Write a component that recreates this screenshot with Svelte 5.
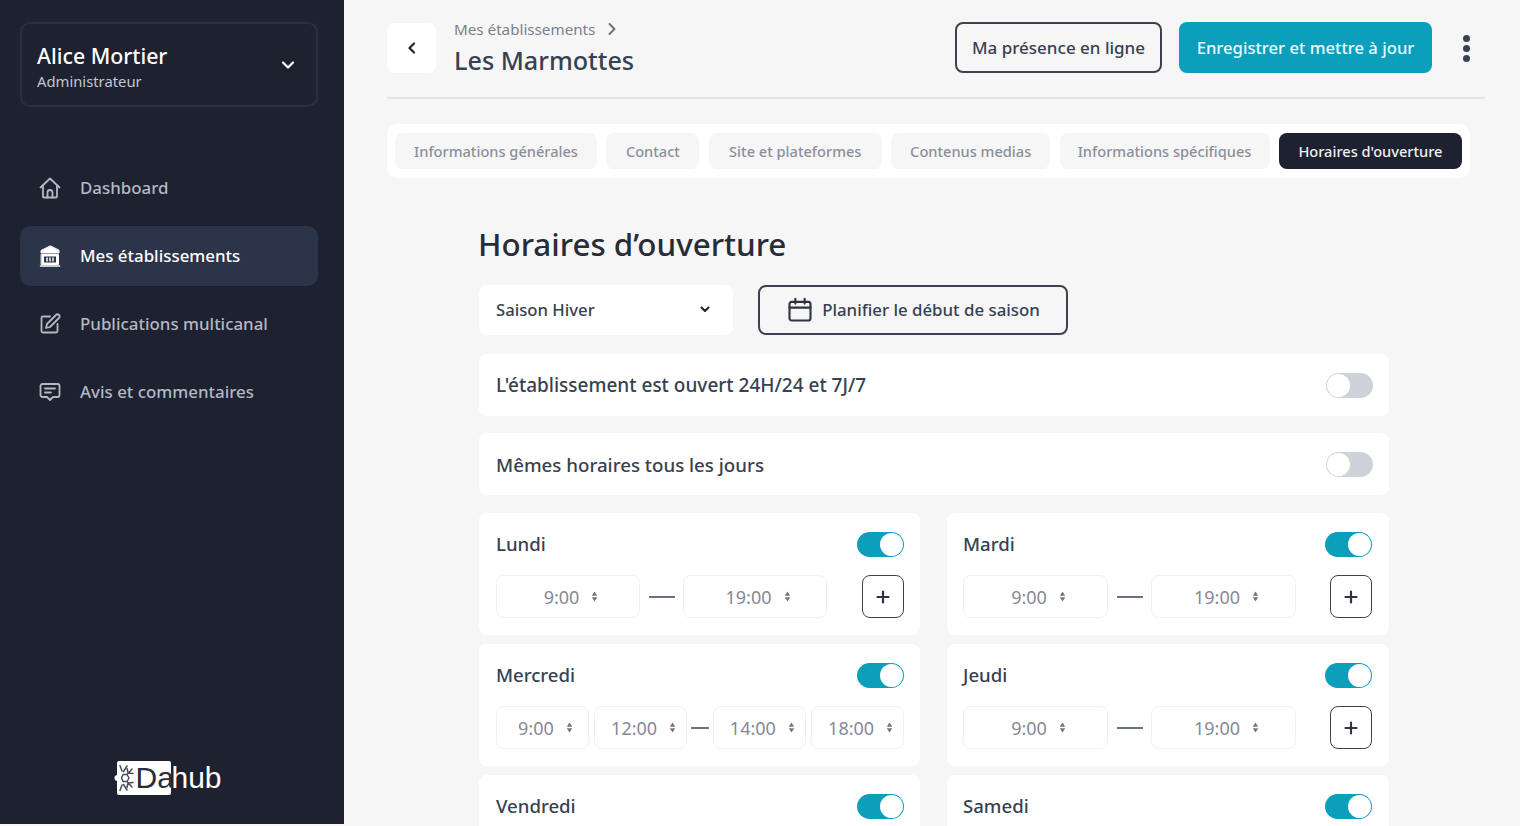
<script>
  const nav = [
    { label: 'Dashboard', icon: 'home' },
    { label: 'Mes établissements', icon: 'bank', active: true },
    { label: 'Publications multicanal', icon: 'edit' },
    { label: 'Avis et commentaires', icon: 'chat' }
  ];
  const tabs = [
    'Informations générales',
    'Contact',
    'Site et plateformes',
    'Contenus medias',
    'Informations spécifiques',
    "Horaires d'ouverture"
  ];
  const days = [
    { name: 'Lundi', times: ['9:00', '19:00'] },
    { name: 'Mardi', times: ['9:00', '19:00'] },
    { name: 'Mercredi', times: ['9:00', '12:00', '14:00', '18:00'] },
    { name: 'Jeudi', times: ['9:00', '19:00'] },
    { name: 'Vendredi', times: [] },
    { name: 'Samedi', times: [] }
  ];
</script>

{#snippet spin()}
  <svg class="spin" viewBox="0 0 7 11" width="7" height="11" aria-hidden="true">
    <path d="M3.500 0.500 6.200 4.700H0.800ZM3.500 10.500 0.800 6.300H6.200Z" fill="#70757f" />
  </svg>
{/snippet}

{#snippet time(t)}
  <div class="time"><span>{t}</span>{@render spin()}</div>
{/snippet}

<div class="app">
  <aside class="side">
    <div class="user">
      <div class="who">
        <div class="uname">Alice Mortier</div>
        <div class="urole">Administrateur</div>
      </div>
      <svg viewBox="0 0 16 16" width="16" height="16" fill="none" stroke="#fff" stroke-width="2.200" stroke-linecap="round" stroke-linejoin="round"><path d="M3 5.500 8 10.500 13 5.500" /></svg>
    </div>
    <nav class="nav">
      {#each nav as n}
        <div class="item" class:active={n.active}>
          <svg viewBox="0 0 24 24" width="24" height="24" fill="none" stroke="currentColor" stroke-width="1.800" stroke-linecap="round" stroke-linejoin="round">
            {#if n.icon === 'home'}
              <path d="M2.500 11.500 12 2.500l9.500 9" />
              <path d="M5 9.500V20.500a1 1 0 0 0 1 1h12a1 1 0 0 0 1-1V9.500" />
              <path d="M9.500 21.500V16.500a2.500 2.500 0 0 1 5 0v5" />
            {:else if n.icon === 'bank'}
              <path d="M12 2 3 6.500V9h18V6.500Z" fill="currentColor" stroke-width="1" />
              <path d="M3.500 10.500h17V20.500h-17Z" fill="currentColor" stroke-width="1" />
              <rect x="6" y="12.500" width="12" height="6" fill="#2c3449" stroke="none" />
              <path d="M9 13.500v4M12 13.500v4M15 13.500v4" stroke="#fff" stroke-width="1.500" stroke-linecap="butt" />
              <path d="M2.500 22h19" stroke-width="1.500" />
            {:else if n.icon === 'edit'}
              <path d="M12 4.500H5a1.500 1.500 0 0 0-1.500 1.500v13A1.500 1.500 0 0 0 5 20.500h13a1.500 1.500 0 0 0 1.500-1.500v-7" />
              <path d="M18 3a2.100 2.100 0 0 1 3 3l-9 9-4 1 1-4Z" />
            {:else}
              <path d="M4.500 4h15A2 2 0 0 1 21.500 6v9a2 2 0 0 1-2 2H15l-3 3-3-3H4.500a2 2 0 0 1-2-2V6a2 2 0 0 1 2-2Z" />
              <path d="M7 8.500h10M7 12.500h6" />
            {/if}
          </svg>
          <span>{n.label}</span>
        </div>
      {/each}
    </nav>
    <div class="logo">
      <div class="logobox">
        <svg viewBox="0 0 22 32" width="22" height="32" fill="none" stroke="#4a4d56" stroke-width="1.500" stroke-linecap="round" stroke-linejoin="round">
          <circle cx="3.500" cy="16" r="3" fill="#fff" stroke="none" />
          <path d="M9 12.500h4l2 3.500-2 3.500H9L7.500 16Z" />
          <path d="M6 3.500 8 9M13 4l-3.500 5.500" />
          <path d="M13.500 12 18 7M13 6.500l1 4.500 5 .5" />
          <path d="M6 28.500 8 23M13 28l-3.500-5.500" />
          <path d="M13.500 20 18 25M13 25.500l1-4.500 5-.5" />
        </svg>
        <span>Da</span>
      </div>
      <span class="hub">hub</span>
    </div>
  </aside>

  <main class="main">
    <header class="head">
      <button class="back" aria-label="Retour">
        <svg viewBox="0 0 12 12" width="12" height="12" fill="none" stroke="#1d2130" stroke-width="2.200" stroke-linecap="round" stroke-linejoin="round"><path d="M8 1.500 3.500 6 8 10.500" /></svg>
      </button>
      <div class="crumbs">
        <div class="crumb">
          <span>Mes établissements</span>
          <svg viewBox="0 0 10 14" width="10" height="14" fill="none" stroke="#6b7280" stroke-width="2" stroke-linecap="round" stroke-linejoin="round"><path d="M2.500 2 7.500 7 2.500 12" /></svg>
        </div>
        <div class="place">Les Marmottes</div>
      </div>
      <button class="btn-line">Ma présence en ligne</button>
      <button class="btn-main">Enregistrer et mettre à jour</button>
      <div class="dots"><i></i><i></i><i></i></div>
    </header>

    <div class="tabs">
      {#each tabs as t, i}
        <div class="tab" class:on={i === 5}>{t}</div>
      {/each}
    </div>

    <section class="content">
      <h1>Horaires d’ouverture</h1>
      <div class="tools">
        <div class="select">
          <span>Saison Hiver</span>
          <svg viewBox="0 0 12 12" width="12" height="12" fill="none" stroke="#1d2130" stroke-width="2" stroke-linecap="round" stroke-linejoin="round"><path d="M2.500 4.500 6 8l3.500-3.500" /></svg>
        </div>
        <button class="plan">
          <svg viewBox="0 0 24 24" width="28" height="28" fill="none" stroke="#2d3340" stroke-width="1.800" stroke-linecap="round" stroke-linejoin="round"><rect x="3" y="5" width="18" height="16" rx="2" /><path d="M8 2.500v4M16 2.500v4M3 10h18" /></svg>
          <span>Planifier le début de saison</span>
        </button>
      </div>

      <div class="row"><span>L'établissement est ouvert 24H/24 et 7J/7</span><div class="toggle"></div></div>
      <div class="row second"><span>Mêmes horaires tous les jours</span><div class="toggle"></div></div>

      <div class="days">
        {#each days as d}
          <div class="day">
            <div class="dayhead">
              <span>{d.name}</span>
              <div class="toggle on"></div>
            </div>
            {#if d.times.length === 2}
              <div class="times">
                {@render time(d.times[0])}
                <div class="dash"></div>
                {@render time(d.times[1])}
                <button class="plus" aria-label="Ajouter">
                  <svg viewBox="0 0 14 14" width="14" height="14" fill="none" stroke="#2d3340" stroke-width="2.200" stroke-linecap="round"><path d="M7 1.500v11M1.500 7h11" /></svg>
                </button>
              </div>
            {:else if d.times.length === 4}
              <div class="times four">
                {@render time(d.times[0])}
                {@render time(d.times[1])}
                <div class="dash short"></div>
                {@render time(d.times[2])}
                {@render time(d.times[3])}
              </div>
            {/if}
          </div>
        {/each}
      </div>
    </section>
  </main>
</div>

<style>
  :global(body) {
    margin: 0;
    background: #f6f6f6;
  }
  .app {
    display: flex;
    align-items: flex-start;
    height: 826px;
    overflow: hidden;
    font-family: "Noto Sans", "Open Sans", sans-serif;
    color: #374151;
  }
  button {
    font-family: inherit;
    cursor: pointer;
  }
  .side {
    width: 344px;
    height: 824px;
    flex: none;
    box-sizing: border-box;
    background: #1d2130;
    padding: 22px 26px 0 20px;
    display: flex;
    flex-direction: column;
  }
  .user {
    height: 85px;
    box-sizing: border-box;
    border: 2px solid #2b3040;
    border-radius: 10px;
    padding: 0 20px 0 15px;
    display: flex;
    align-items: center;
    justify-content: space-between;
  }
  .who {
    margin-top: 4px;
  }
  .uname {
    color: #fff;
    font-size: 21.300px;
    font-weight: 500;
    line-height: 28px;
  }
  .urole {
    color: #c3c6cf;
    font-size: 14.800px;
    line-height: 20px;
    margin-top: 1px;
  }
  .nav {
    margin-top: 51px;
    display: flex;
    flex-direction: column;
    gap: 8px;
  }
  .item {
    height: 60px;
    border-radius: 10px;
    display: flex;
    align-items: center;
    gap: 18px;
    padding-left: 18px;
    color: #b4b8c2;
    font-size: 16.900px;
    font-weight: 500;
  }
  .item svg {
    flex: none;
  }
  .item span {
    margin-top: -2px;
  }
  .item.active {
    background: #2c3449;
    color: #fff;
  }
  .logo {
    margin-top: auto;
    margin-bottom: 29px;
    align-self: center;
    margin-left: 1px;
    display: flex;
    align-items: center;
    color: #fff;
    font-size: 30px;
    line-height: 34px;
    font-family: "Liberation Sans", sans-serif;
  }
  .logobox {
    display: flex;
    align-items: center;
    background: #fff;
    color: #2a2d36;
    height: 34px;
    width: 54px;
    border-radius: 2px;
    overflow: visible;
  }
  .logobox svg {
    flex: none;
    margin-left: -3px;
    margin-right: -1px;
  }
  .main {
    flex: 1;
    min-width: 0;
    box-sizing: border-box;
    padding: 0 35px 0 43px;
  }
  .head {
    height: 99px;
    box-sizing: border-box;
    border-bottom: 2px solid #e2e3e6;
    display: flex;
    align-items: flex-start;
    padding-top: 23px;
  }
  .back {
    width: 49px;
    height: 50px;
    background: #fff;
    border: none;
    border-radius: 8px;
    display: flex;
    align-items: center;
    justify-content: center;
    padding: 0;
  }
  .crumbs {
    margin-left: 18px;
    margin-top: -3px;
    flex: 1;
  }
  .crumb {
    display: flex;
    align-items: center;
    gap: 12px;
    height: 18px;
    color: #7b808c;
    font-size: 15.200px;
  }
  .place {
    font-size: 25.200px;
    font-weight: 500;
    line-height: 34px;
    margin-top: 5px;
    color: #374151;
  }
  .btn-line {
    width: 207px;
    height: 51px;
    margin-top: -1px;
    box-sizing: border-box;
    background: #f6f6f6;
    border: 2px solid #3d4250;
    border-radius: 8px;
    font-size: 17px;
    font-weight: 500;
    color: #374151;
    padding: 0;
  }
  .btn-main {
    width: 253px;
    height: 51px;
    margin-top: -1px;
    margin-left: 17px;
    background: #0b9fbc;
    border: none;
    border-radius: 8px;
    color: #e6fbff;
    font-size: 16.650px;
    font-weight: 500;
    padding: 0;
  }
  .dots {
    width: 53px;
    height: 50px;
    flex: none;
    display: flex;
    flex-direction: column;
    align-items: center;
    justify-content: center;
    gap: 3px;
    padding-left: 15px;
    box-sizing: border-box;
  }
  .dots i {
    width: 7px;
    height: 7px;
    border-radius: 50%;
    background: #374151;
  }
  .tabs {
    margin-top: 25px;
    width: 1083px;
    height: 54px;
    box-sizing: border-box;
    background: #fff;
    border-radius: 10px;
    padding: 9px 8px;
    display: grid;
    grid-template-columns: 202px 93px 173px 159px 210px 183px;
    column-gap: 9.400px;
  }
  .tab {
    height: 36px;
    box-sizing: border-box;
    display: flex;
    align-items: center;
    justify-content: center;
    background: #f6f6f6;
    border-radius: 8px;
    color: #8b8f9a;
    font-size: 14.600px;
    font-weight: 500;
    white-space: nowrap;
  }
  .tab.on {
    background: #1d2130;
    color: #eef0f3;
  }
  .content {
    width: 910px;
    margin-left: 92px;
    margin-top: 45px;
  }
  h1 {
    margin: 0;
    margin-left: -1px;
    font-size: 31.400px;
    font-weight: 500;
    line-height: 42px;
    color: #282c36;
  }
  .tools {
    margin-top: 20px;
    display: flex;
    gap: 25px;
  }
  .select {
    width: 254px;
    height: 50px;
    box-sizing: border-box;
    background: #fff;
    border-radius: 8px;
    padding: 0 22px 2px 17px;
    display: flex;
    align-items: center;
    justify-content: space-between;
    font-size: 16.700px;
    font-weight: 500;
    color: #374151;
  }
  .plan {
    width: 310px;
    height: 50px;
    background: #f6f6f6;
    border: 2px solid #3d4250;
    border-radius: 8px;
    display: flex;
    align-items: center;
    justify-content: center;
    gap: 8px;
    font-size: 16.850px;
    font-weight: 500;
    color: #374151;
    padding: 0;
  }
  .plan span {
    margin-top: -2px;
  }
  .row {
    margin-top: 19px;
    height: 62px;
    box-sizing: border-box;
    background: #fff;
    border-radius: 8px;
    padding: 0 16px 0 17px;
    display: flex;
    align-items: center;
    justify-content: space-between;
    font-size: 19px;
    font-weight: 500;
  }
  .row.second {
    margin-top: 17px;
    font-size: 18.700px;
  }
  .toggle {
    position: relative;
    width: 47px;
    height: 25px;
    border-radius: 13px;
    background: #cfd2d8;
    flex: none;
  }
  .toggle::after {
    content: "";
    position: absolute;
    left: 1px;
    top: 1px;
    width: 23px;
    height: 23px;
    border-radius: 50%;
    background: #fff;
  }
  .toggle.on {
    background: #0b9fbc;
  }
  .toggle.on::after {
    left: 23px;
  }
  .days {
    margin-top: 18px;
    display: grid;
    grid-template-columns: 441px 442px;
    column-gap: 27px;
    row-gap: 9px;
  }
  .day {
    height: 122px;
    box-sizing: border-box;
    background: #fff;
    border-radius: 8px;
    padding: 19px 16px 0 17px;
  }
  .day:nth-child(even) {
    padding: 19px 17px 0 16px;
  }
  .day:nth-child(even) .time {
    width: 145px;
  }
  .dayhead {
    display: flex;
    align-items: center;
    justify-content: space-between;
    height: 25px;
    font-size: 18.600px;
    font-weight: 500;
  }
  .dayhead span {
    margin-top: -2px;
  }
  .times {
    margin-top: 18px;
    display: flex;
    align-items: center;
  }
  .time {
    width: 144px;
    height: 43px;
    box-sizing: border-box;
    border: 1px solid #f1f1f3;
    border-radius: 8px;
    display: flex;
    align-items: center;
    justify-content: center;
    gap: 12px;
    padding-left: 6px;
    color: #858a95;
    font-size: 18px;
    flex: none;
  }
  .dash {
    width: 26px;
    height: 2px;
    background: #6b7280;
    margin: 0 8px 0 9px;
    flex: none;
  }
  .plus {
    width: 42px;
    height: 43px;
    margin-left: auto;
    background: #fff;
    border: 1.500px solid #3d4250;
    border-radius: 8px;
    display: flex;
    align-items: center;
    justify-content: center;
    padding: 0;
  }
  .four .time {
    width: 92.750px;
  }
  .four .time + .time {
    margin-left: 5.500px;
  }
  .dash.short {
    width: 18px;
    margin: 0 4px;
  }
</style>
